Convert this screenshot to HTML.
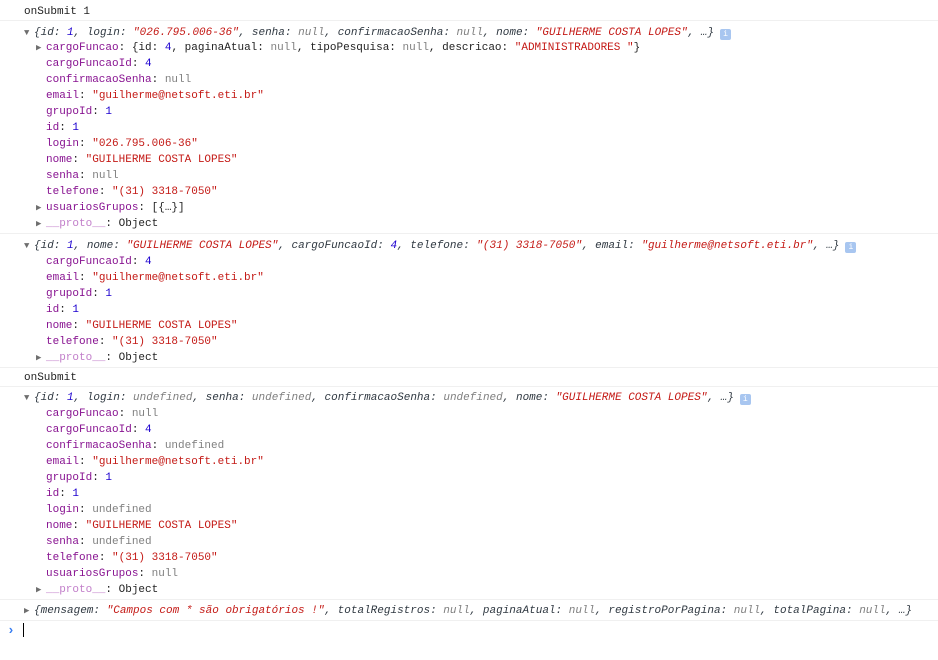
<!DOCTYPE html>
<html><head><meta charset="utf-8"><style>
html,body{margin:0;padding:0;background:#fff;width:938px;height:660px;overflow:hidden}
body{position:relative;font-family:"Liberation Mono",monospace;font-size:11px;color:#222}
.l{position:absolute;height:14px;line-height:14px;white-space:pre;margin-top:1px}
.b{position:absolute;left:0;width:938px;height:1px;background:#f0f0f0}
.k{color:#881391}.s{color:#c41a16}.n{color:#1c00cf}.u{color:#808080}
.p{color:#c27fca}
.i{font-style:italic;color:#303942}
.t{display:inline-block;width:10px;color:#6e6e6e;font-style:normal;font-size:9px}
.info{display:inline-block;width:11px;height:11px;background:#a8c6f0;border-radius:2px;color:#fff;font-size:8px;line-height:11px;text-align:center;font-style:normal;vertical-align:-1px;margin-left:6px}
</style></head><body>
<div class="l" style="left:24px;top:4px">onSubmit 1</div>
<div class="b" style="top:20px"></div>
<div class="l i" style="left:24px;top:25px"><span class="t">▼</span>{id: <span class="n">1</span>, login: <span class="s">"026.795.006-36"</span>, senha: <span class="u">null</span>, confirmacaoSenha: <span class="u">null</span>, nome: <span class="s">"GUILHERME COSTA LOPES"</span>, …}<span class="info">i</span></div>
<div class="l" style="left:36px;top:40px"><span class="t">▶</span><span class="k">cargoFuncao</span>: {id: <span class="n">4</span>, paginaAtual: <span class="u">null</span>, tipoPesquisa: <span class="u">null</span>, descricao: <span class="s">"ADMINISTRADORES "</span>}</div>
<div class="l" style="left:46px;top:56px"><span class="k">cargoFuncaoId</span>: <span class="n">4</span></div>
<div class="l" style="left:46px;top:72px"><span class="k">confirmacaoSenha</span>: <span class="u">null</span></div>
<div class="l" style="left:46px;top:88px"><span class="k">email</span>: <span class="s">"guilherme@netsoft.eti.br"</span></div>
<div class="l" style="left:46px;top:104px"><span class="k">grupoId</span>: <span class="n">1</span></div>
<div class="l" style="left:46px;top:120px"><span class="k">id</span>: <span class="n">1</span></div>
<div class="l" style="left:46px;top:136px"><span class="k">login</span>: <span class="s">"026.795.006-36"</span></div>
<div class="l" style="left:46px;top:152px"><span class="k">nome</span>: <span class="s">"GUILHERME COSTA LOPES"</span></div>
<div class="l" style="left:46px;top:168px"><span class="k">senha</span>: <span class="u">null</span></div>
<div class="l" style="left:46px;top:184px"><span class="k">telefone</span>: <span class="s">"(31) 3318-7050"</span></div>
<div class="l" style="left:36px;top:200px"><span class="t">▶</span><span class="k">usuariosGrupos</span>: [{…}]</div>
<div class="l" style="left:36px;top:216px"><span class="t">▶</span><span class="p">__proto__</span>: Object</div>
<div class="b" style="top:233px"></div>
<div class="l i" style="left:24px;top:238px"><span class="t">▼</span>{id: <span class="n">1</span>, nome: <span class="s">"GUILHERME COSTA LOPES"</span>, cargoFuncaoId: <span class="n">4</span>, telefone: <span class="s">"(31) 3318-7050"</span>, email: <span class="s">"guilherme@netsoft.eti.br"</span>, …}<span class="info">i</span></div>
<div class="l" style="left:46px;top:254px"><span class="k">cargoFuncaoId</span>: <span class="n">4</span></div>
<div class="l" style="left:46px;top:270px"><span class="k">email</span>: <span class="s">"guilherme@netsoft.eti.br"</span></div>
<div class="l" style="left:46px;top:286px"><span class="k">grupoId</span>: <span class="n">1</span></div>
<div class="l" style="left:46px;top:302px"><span class="k">id</span>: <span class="n">1</span></div>
<div class="l" style="left:46px;top:318px"><span class="k">nome</span>: <span class="s">"GUILHERME COSTA LOPES"</span></div>
<div class="l" style="left:46px;top:334px"><span class="k">telefone</span>: <span class="s">"(31) 3318-7050"</span></div>
<div class="l" style="left:36px;top:350px"><span class="t">▶</span><span class="p">__proto__</span>: Object</div>
<div class="b" style="top:367px"></div>
<div class="l" style="left:24px;top:370px">onSubmit</div>
<div class="b" style="top:386px"></div>
<div class="l i" style="left:24px;top:390px"><span class="t">▼</span>{id: <span class="n">1</span>, login: <span class="u">undefined</span>, senha: <span class="u">undefined</span>, confirmacaoSenha: <span class="u">undefined</span>, nome: <span class="s">"GUILHERME COSTA LOPES"</span>, …}<span class="info">i</span></div>
<div class="l" style="left:46px;top:406px"><span class="k">cargoFuncao</span>: <span class="u">null</span></div>
<div class="l" style="left:46px;top:422px"><span class="k">cargoFuncaoId</span>: <span class="n">4</span></div>
<div class="l" style="left:46px;top:438px"><span class="k">confirmacaoSenha</span>: <span class="u">undefined</span></div>
<div class="l" style="left:46px;top:454px"><span class="k">email</span>: <span class="s">"guilherme@netsoft.eti.br"</span></div>
<div class="l" style="left:46px;top:470px"><span class="k">grupoId</span>: <span class="n">1</span></div>
<div class="l" style="left:46px;top:486px"><span class="k">id</span>: <span class="n">1</span></div>
<div class="l" style="left:46px;top:502px"><span class="k">login</span>: <span class="u">undefined</span></div>
<div class="l" style="left:46px;top:518px"><span class="k">nome</span>: <span class="s">"GUILHERME COSTA LOPES"</span></div>
<div class="l" style="left:46px;top:534px"><span class="k">senha</span>: <span class="u">undefined</span></div>
<div class="l" style="left:46px;top:550px"><span class="k">telefone</span>: <span class="s">"(31) 3318-7050"</span></div>
<div class="l" style="left:46px;top:566px"><span class="k">usuariosGrupos</span>: <span class="u">null</span></div>
<div class="l" style="left:36px;top:582px"><span class="t">▶</span><span class="p">__proto__</span>: Object</div>
<div class="b" style="top:599px"></div>
<div class="l i" style="left:24px;top:603px"><span class="t">▶</span>{mensagem: <span class="s">"Campos com * são obrigatórios !"</span>, totalRegistros: <span class="u">null</span>, paginaAtual: <span class="u">null</span>, registroPorPagina: <span class="u">null</span>, totalPagina: <span class="u">null</span>, …}</div>
<div class="b" style="top:620px"></div>
<div class="l" style="left:7px;top:623px;color:#367cf1;font-weight:bold;font-size:13px">›</div>
<div style="position:absolute;left:23px;top:623px;width:1px;height:14px;background:#000"></div>
</body></html>
